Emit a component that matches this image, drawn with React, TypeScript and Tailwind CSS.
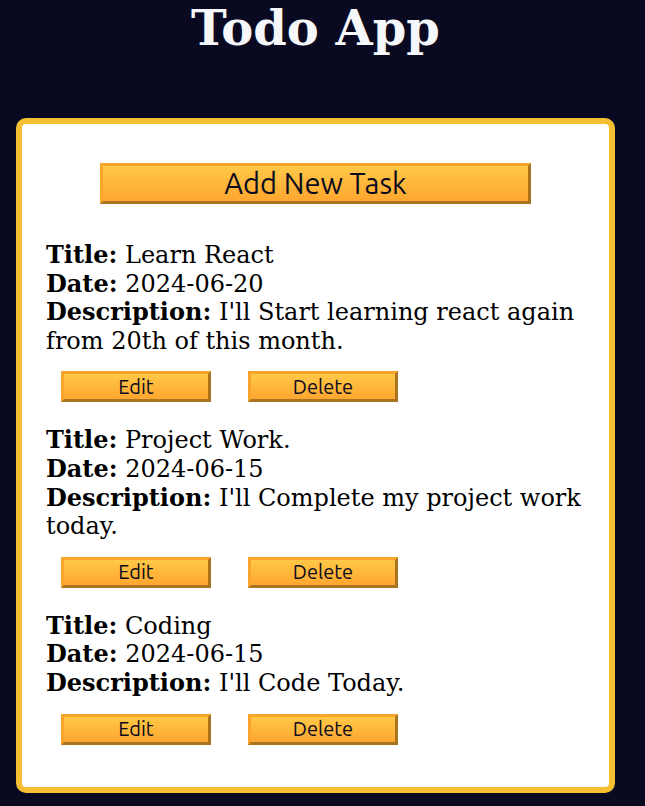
const tasks = [
  {
    id: 1,
    title: 'Learn React',
    date: '2024-06-20',
    description: "I'll Start learning react again from 20th of this month.",
  },
  {
    id: 2,
    title: 'Project Work.',
    date: '2024-06-15',
    description: "I'll Complete my project work today.",
  },
  {
    id: 3,
    title: 'Coding',
    date: '2024-06-15',
    description: "I'll Code Today.",
  },
];

const btn =
  'bg-gradient-to-b from-[#ffc847] to-[#ffa62f] border-[3px] border-t-[#f9a42b] border-l-[#f9a42b] border-b-[#a8741f] border-r-[#a8741f] text-[#0b0b1e] font-["Ubuntu","Open_Sans",sans-serif] leading-none';

export default function App() {
  return (
    <div className="min-h-screen bg-[#090a22]">
      <div className="w-[631px] px-4 pb-[14px] font-['DejaVu_Serif',serif]">
        <h1 className="text-center text-[48px] font-bold leading-[56px] text-[#f5f7fa]">Todo App</h1>

        {/* card */}
        <div className="mt-[62px] rounded-[10px] border-[6px] border-[#f4bf33] bg-white px-6 pt-[39px] pb-[42px]">
          <button className={`${btn} mx-auto block h-[41px] w-[431px] text-[29px]`}>Add New Task</button>

          <div className="mt-[37px] flex flex-col gap-[24px]">
            {tasks.map((task) => (
              <div key={task.id}>
                <div className="text-[24px] leading-[28.6px] text-black">
                  <p>
                    <b>Title:</b> {task.title}
                  </p>
                  <p>
                    <b>Date:</b> {task.date}
                  </p>
                  <p>
                    <b>Description:</b> {task.description}
                  </p>
                </div>
                <div className="mt-[16px] ml-[15px] flex gap-[37px]">
                  <button className={`${btn} h-[31px] w-[150px] text-[20px]`}>Edit</button>
                  <button className={`${btn} h-[31px] w-[150px] text-[20px]`}>Delete</button>
                </div>
              </div>
            ))}
          </div>
        </div>
      </div>
    </div>
  );
}
